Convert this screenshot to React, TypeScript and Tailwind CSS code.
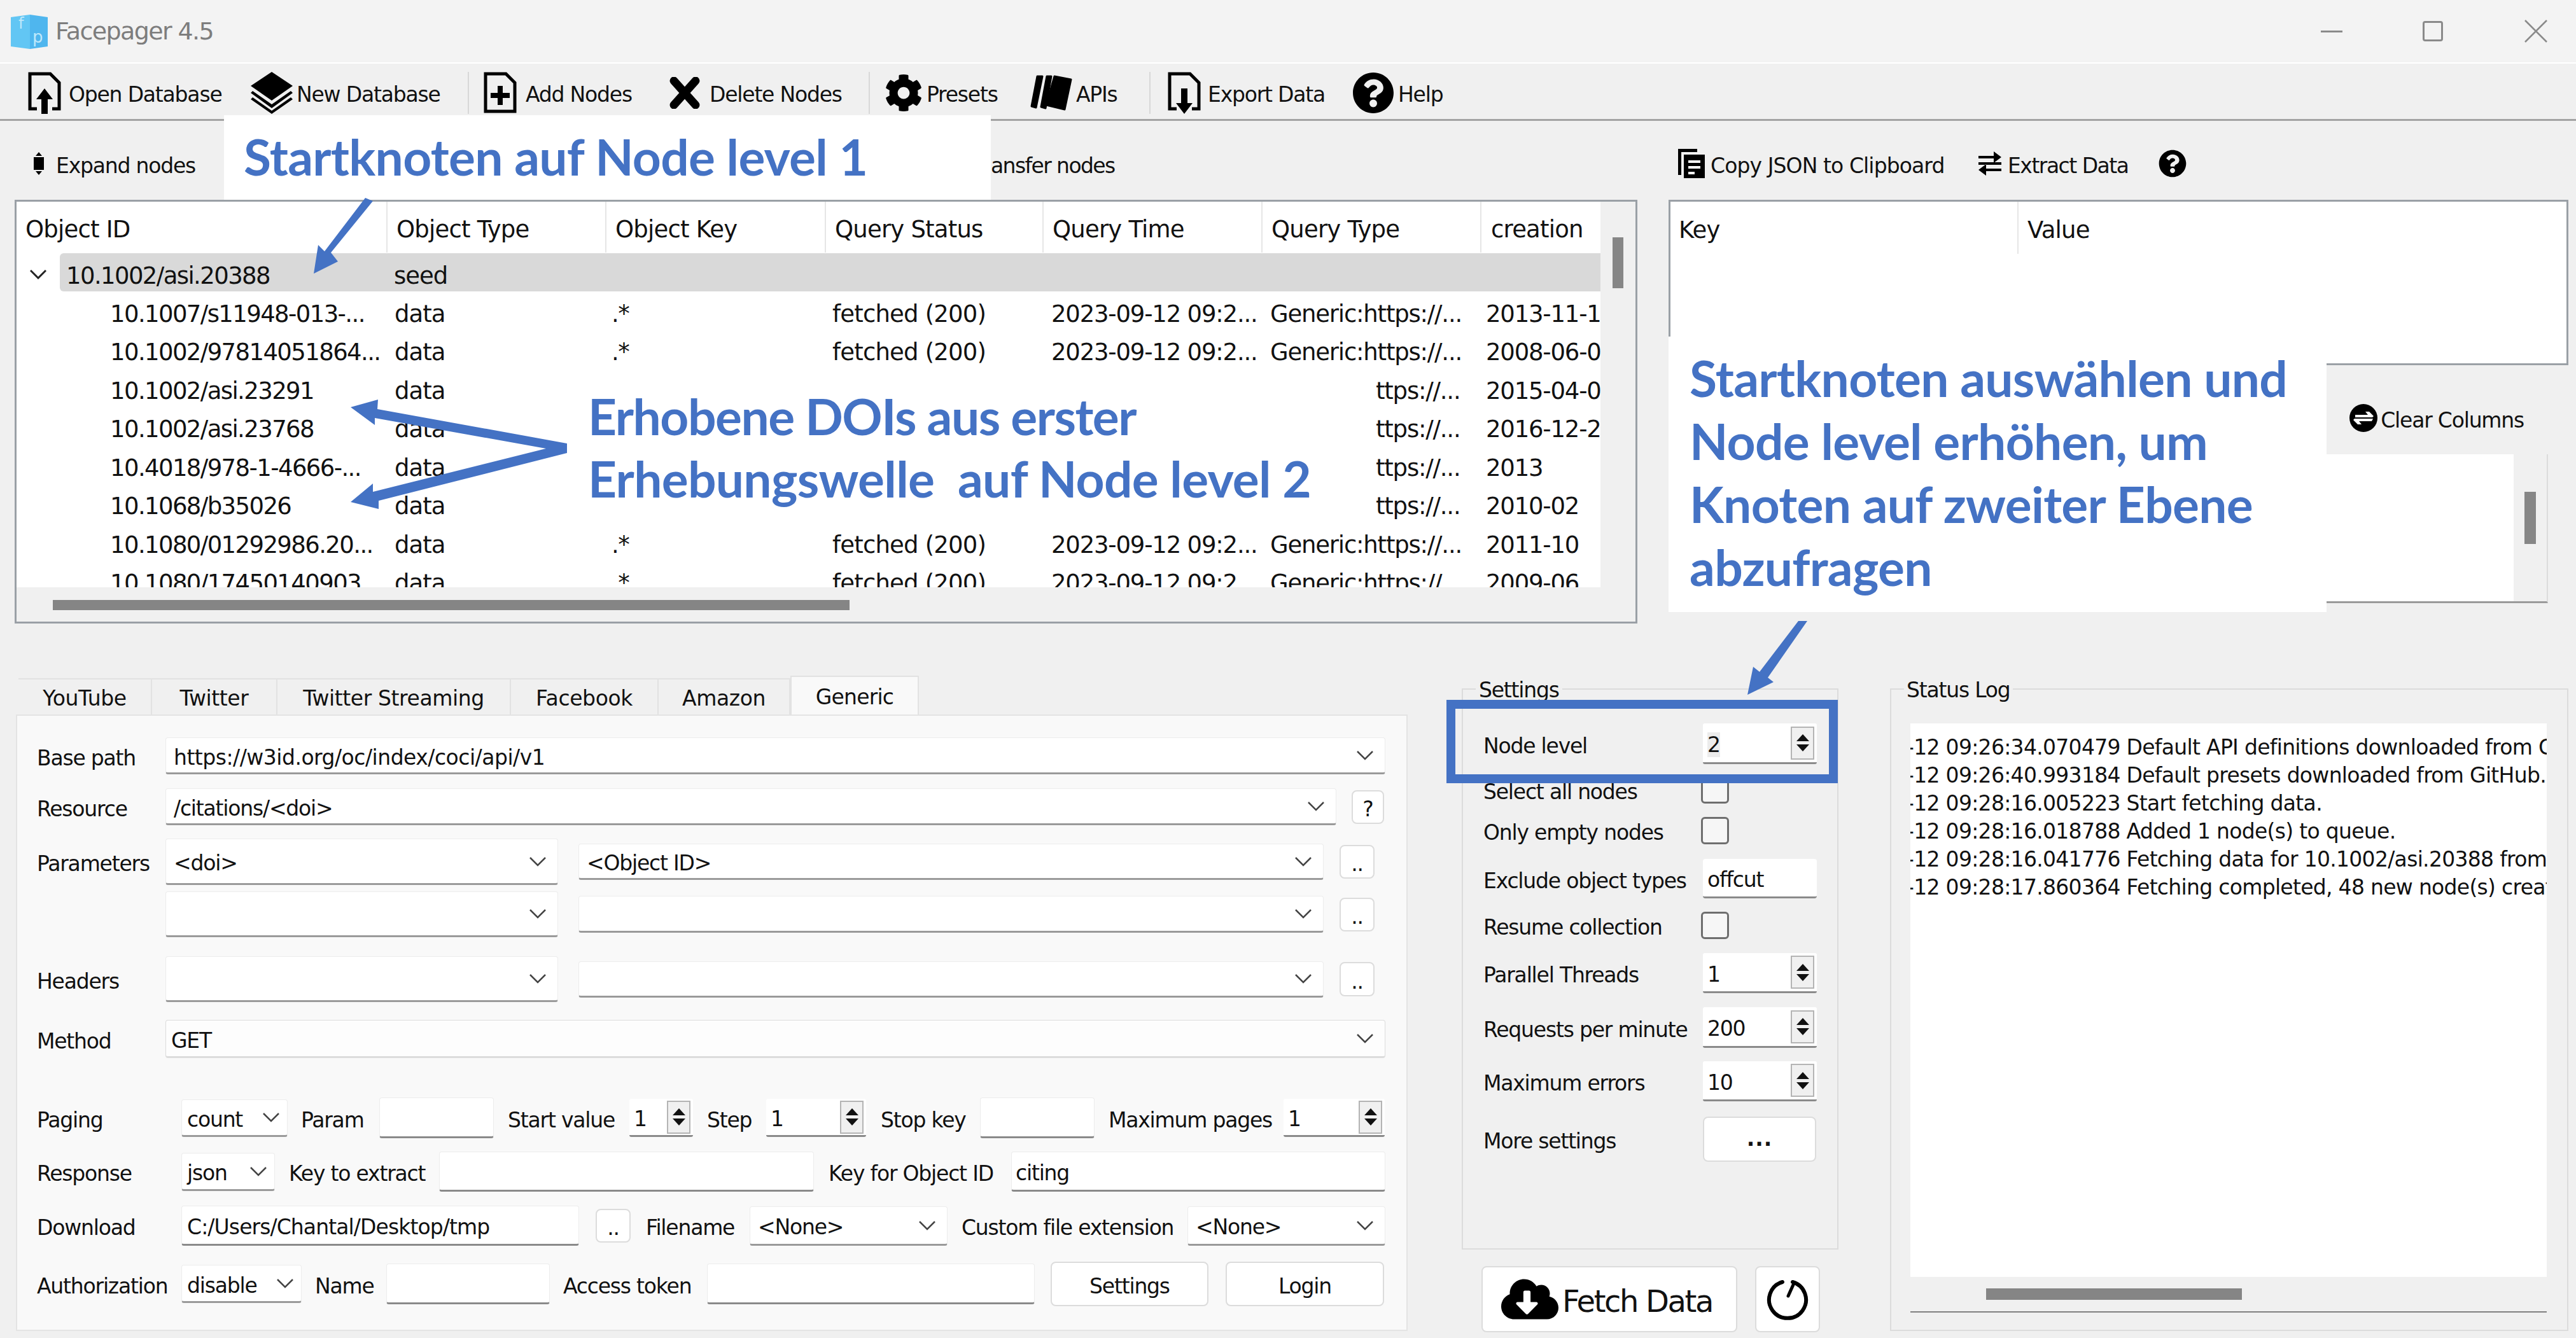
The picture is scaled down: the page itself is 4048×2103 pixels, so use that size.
/**
 * Facepager 4.5 main window with blue tutorial annotations on top.
 */
import type { ReactNode } from 'react';
import { FaCog, FaQuestionCircle, FaCloudDownloadAlt } from 'react-icons/fa';

const ui = "font-['DejaVu_Sans',sans-serif] text-[#111] whitespace-nowrap";

interface BoxProps {
  className?: string;
  children?: ReactNode;
}

function Text({ className = '', children }: BoxProps) {
  return <span className={`shrink-0 pt-[6px] text-[33px] tracking-[-1.2px] leading-none ${className}`}>{children}</span>;
}

function Chevron() {
  return (
    <svg width="26" height="16" viewBox="0 0 26 16" className="shrink-0" fill="none" stroke="#444" strokeWidth="2.5">
      <path d="M1 2l12 12L25 2" />
    </svg>
  );
}

function Input({ className = '', textClass = '', children }: BoxProps & { textClass?: string }) {
  return (
    <div className={`flex items-center shrink-0 bg-white rounded-[4px] border border-[#ececec] border-b-[3px] border-b-[#8a8a8a] pl-[8px] ${className}`}>
      <Text className={textClass}>{children}</Text>
    </div>
  );
}

function Combo({ className = '', textClass = '', children }: BoxProps & { textClass?: string }) {
  return (
    <div className={`flex items-center justify-between shrink-0 bg-white rounded-[4px] border border-[#ececec] border-b-[3px] border-b-[#9a9a9a] pl-[12px] pr-[18px] ${className}`}>
      <Text className={textClass}>{children}</Text>
      <Chevron />
    </div>
  );
}

function Spin({ className = '', children }: BoxProps) {
  return (
    <div className={`flex items-center justify-between shrink-0 bg-white rounded-[3px] border-b-[3px] border-b-[#8a8a8a] pl-[7px] pr-[4px] ${className}`}>
      <Text>{children}</Text>
      <div className="flex flex-col items-center justify-center gap-[5px] w-[37px] h-[52px] border-2 border-[#b4b4b4] bg-[#f0f0f0]">
        <svg width="20" height="11" viewBox="0 0 20 11"><path d="M10 0l10 11H0z" fill="#111" /></svg>
        <svg width="20" height="11" viewBox="0 0 20 11"><path d="M10 11L20 0H0z" fill="#111" /></svg>
      </div>
    </div>
  );
}

function Button({ className = '', children }: BoxProps) {
  return (
    <div className={`flex items-center justify-center shrink-0 bg-white rounded-[8px] border-2 border-[#dcdcdc] ${className}`}>
      {children}
    </div>
  );
}

function Check() {
  return <div className="-ml-[3px] w-[44px] h-[43px] shrink-0 rounded-[6px] border-[3px] border-[#6e6e6e] bg-[#f6f6f6]" />;
}

function DocIcon({ arrow }: { arrow: 'up' | 'down' | 'plus' }) {
  return (
    <svg width="52" height="66" viewBox="0 0 52 66" className="shrink-0">
      {arrow === 'plus' ? (
        <>
          <path d="M3 62V3h32l14 14v45z" fill="none" stroke="#000" strokeWidth="5" />
          <path d="M22 22h8v11h11v8H30v11h-8V41H11v-8h11z" fill="#000" />
        </>
      ) : (
        <path d="M14 58H3V3h32l14 14v41H38" fill="none" stroke="#000" strokeWidth="5" />
      )}
      {arrow === 'up' && <path d="M26 26l13 17h-8v23H21V43h-8z" fill="#000" />}
      {arrow === 'down' && <path d="M26 66l13-17h-8V26H21v23h-8z" fill="#000" />}
    </svg>
  );
}

function LayersIcon() {
  return (
    <svg width="66" height="66" viewBox="0 0 66 66" className="shrink-0">
      <path d="M33 0l33 22-33 23L0 22z" fill="#000" />
      <path d="M3 30l30 21 30-21 3 3-33 24L0 33z" fill="#000" />
      <path d="M3 40l30 21 30-21 3 3-33 23L0 43z" fill="#000" />
    </svg>
  );
}

function CrossIcon() {
  return (
    <svg width="50" height="50" viewBox="0 0 50 50" className="shrink-0" stroke="#000" strokeWidth="13" strokeLinecap="round">
      <path d="M8 6l34 38M42 6L8 44" />
    </svg>
  );
}

function CardsIcon() {
  return (
    <svg width="66" height="56" viewBox="0 0 66 56" className="shrink-0" fill="#000" stroke="#000" strokeWidth="3" strokeLinejoin="round">
      <path d="M11 2h8L9 51l-7-2z" />
      <path d="M26 2h7L24 52l-7-2z" />
      <path d="M38 2l26 5-10 47-29-7z" />
    </svg>
  );
}

function ToolItem({ className = '', icon, label, gap }: { className?: string; icon: ReactNode; label: string; gap: string }) {
  return (
    <div className={`flex items-center shrink-0 ${gap} ${className}`}>
      {icon}
      <Text>{label}</Text>
    </div>
  );
}

function Toolbar() {
  return (
    <div className="flex items-center h-[90px] pl-[44px] pt-[4px] bg-[#f0f0f0] border-b-[3px] border-[#a3a3a3]">
      <ToolItem className="w-[350px]" gap="gap-[12px]" icon={<DocIcon arrow="up" />} label="Open Database" />
      <ToolItem className="w-[341px]" gap="gap-[6px]" icon={<LayersIcon />} label="New Database" />
      <div className="w-[2px] h-[66px] bg-[#d8d8d8] mr-[23px]" />
      <ToolItem className="w-[291px]" gap="gap-[14px]" icon={<DocIcon arrow="plus" />} label="Add Nodes" />
      <ToolItem className="w-[314px]" gap="gap-[14px]" icon={<CrossIcon />} label="Delete Nodes" />
      <div className="w-[2px] h-[66px] bg-[#d8d8d8] mr-[23px]" />
      <ToolItem className="w-[229px]" gap="gap-[6px]" icon={<FaCog size={60} color="#000" />} label="Presets" />
      <ToolItem className="w-[187px]" gap="gap-[6px]" icon={<CardsIcon />} label="APIs" />
      <div className="w-[2px] h-[66px] bg-[#d8d8d8] mr-[27px]" />
      <ToolItem className="w-[290px]" gap="gap-[11px]" icon={<DocIcon arrow="down" />} label="Export Data" />
      <ToolItem gap="gap-[6px]" icon={<FaQuestionCircle size={66} color="#000" />} label="Help" />
    </div>
  );
}

const fetchedCells = ['.*', 'fetched (200)', '2023-09-12 09:2...', 'Generic:https://...'];
// Rows behind the annotation only show the tail of the query type
const coveredCells = ['', '', '', 'ttps://...'];

const treeRows = [
  ['10.1007/s11948-013-...', ...fetchedCells, '2013-11-18'],
  ['10.1002/97814051864...', ...fetchedCells, '2008-06-05'],
  ['10.1002/asi.23291', ...coveredCells, '2015-04-02'],
  ['10.1002/asi.23768', ...coveredCells, '2016-12-21'],
  ['10.4018/978-1-4666-...', ...coveredCells, '2013'],
  ['10.1068/b35026', ...coveredCells, '2010-02'],
  ['10.1080/01292986.20...', ...fetchedCells, '2011-10'],
  ['10.1080/17450140903...', ...fetchedCells, '2009-06'],
];

const treeText = 'text-[37px] tracking-[-1.6px] leading-none';
const headText = 'text-[37px] tracking-[-0.8px] leading-none pt-[6px]';

function TreeHeaderCell({ className = '', children }: BoxProps) {
  return (
    <div className={`flex items-center shrink-0 h-[80px] border-r-2 border-[#e6e6e6] pl-[14px] ${headText} ${className}`}>
      {children}
    </div>
  );
}

function TreeRow({ cells }: { cells: string[] }) {
  const covered = cells[1] === '';
  return (
    <div className={`flex items-center shrink-0 h-[60.5px] pt-[10px] ${treeText}`}>
      <span className="w-[583px] pl-[147px] shrink-0">{cells[0]}</span>
      <span className="w-[344px] pl-[11px] shrink-0 tracking-[-1px]">data</span>
      <span className="w-[345px] pl-[8px] shrink-0">{cells[1]}</span>
      <span className="w-[342px] pl-[10px] shrink-0 tracking-[-0.8px]">{cells[2]}</span>
      <span className="w-[344px] pl-[12px] shrink-0 tracking-[-1.2px]">{cells[3]}</span>
      <span className={`w-[344px] shrink-0 tracking-[-1.2px] ${covered ? 'pl-[178px]' : 'pl-[12px]'}`}>{cells[4]}</span>
      <span className="pl-[7px] shrink-0 tracking-[-1.2px]">{cells[5]}</span>
    </div>
  );
}

function TreePanel() {
  return (
    <div className="flex flex-col h-[666px] border-[3px] border-[#9aa0a6] bg-[#f0f0f0]">
      <div className="flex flex-1 min-h-0">
        <div className="flex flex-col w-[2489px] h-[606px] overflow-hidden bg-white">
          <div className="flex shrink-0 h-[81px]">
            <TreeHeaderCell className="w-[583px]">Object ID</TreeHeaderCell>
            <TreeHeaderCell className="w-[344px]">Object Type</TreeHeaderCell>
            <TreeHeaderCell className="w-[345px]">Object Key</TreeHeaderCell>
            <TreeHeaderCell className="w-[342px]">Query Status</TreeHeaderCell>
            <TreeHeaderCell className="w-[344px]">Query Time</TreeHeaderCell>
            <TreeHeaderCell className="w-[344px]">Query Type</TreeHeaderCell>
            <div className={`flex items-center h-[80px] pl-[15px] ${headText}`}>creation</div>
          </div>
          <div className={`flex items-center shrink-0 h-[60px] ${treeText}`}>
            <div className="flex justify-center w-[68px] shrink-0 pt-[6px]">
              <svg width="26" height="16" viewBox="0 0 26 16" fill="none" stroke="#222" strokeWidth="3"><path d="M1 2l12 12L25 2" /></svg>
            </div>
            <div className="flex items-center flex-1 h-[60px] bg-[#d9d9d9] rounded-l-[6px] pl-[10px] pt-[10px]">
              <span className="w-[515px] shrink-0">10.1002/asi.20388</span>
              <span className="tracking-[-1px]">seed</span>
            </div>
          </div>
          {treeRows.map(r => (
            <TreeRow key={r[0]} cells={r} />
          ))}
        </div>
        <div className="flex justify-center flex-1 pt-[56px]">
          <div className="w-[17px] h-[80px] bg-[#868686]" />
        </div>
      </div>
      <div className="h-[54px] shrink-0 pl-[57px] pt-[20px]">
        <div className="w-[1252px] h-[16px] bg-[#858585]" />
      </div>
    </div>
  );
}

function ActionsRight() {
  return (
    <div className="flex items-center h-[124px] pl-[15px] pt-[10px]">
      <svg width="42" height="46" viewBox="0 0 42 46" className="shrink-0">
        <path d="M0 0h30v5H5v36H0z" fill="#000" />
        <path d="M9 9h33v37H9z" fill="#000" />
        <path d="M16 18h19v4H16zM16 27h19v4H16zM16 36h10v4H16z" fill="#fff" />
      </svg>
      <Text className="ml-[9px] w-[421px] !tracking-[-0.9px]">Copy JSON to Clipboard</Text>
      <svg width="36" height="44" viewBox="0 0 36 44" className="shrink-0" fill="#000">
        <path d="M0 10h24V3l12 9-12 9v-7H0zM0 20h36v4H0zM36 30H12v-7L0 32l12 9v-7h24z" />
      </svg>
      <Text className="ml-[10px] w-[237px] !tracking-[-1.5px]">Extract Data</Text>
      <FaQuestionCircle size={44} color="#000" />
    </div>
  );
}

function TabStrip() {
  const tabs = [
    { label: 'YouTube', cls: 'w-[210px]' },
    { label: 'Twitter', cls: 'w-[197px]' },
    { label: 'Twitter Streaming', cls: 'w-[367px]' },
    { label: 'Facebook', cls: 'w-[232px]' },
    { label: 'Amazon', cls: 'w-[207px]' },
  ];
  return (
    <div className="flex items-end h-[63px] pl-[4px]">
      {tabs.map(t => (
        <div key={t.label} className={`flex items-center justify-center h-[57px] bg-[#f0f0f0] border-t-2 border-r-2 border-[#e2e2e2] ${t.cls}`}>
          <Text className="!tracking-[-0.4px] !pt-[4px]">{t.label}</Text>
        </div>
      ))}
      <div className="flex items-center justify-center w-[202px] h-[63px] bg-[#f9f9f9] border-t-2 border-x-2 border-[#e2e2e2] -mb-[2px]">
        <Text className="!tracking-[-0.8px] !pt-[2px]">Generic</Text>
      </div>
    </div>
  );
}

function QueryForm() {
  return (
    <div className="flex flex-col h-[969px] bg-[#f9f9f9] border-2 border-[#e4e4e4] pl-[31px] pt-[34px]">
      <div className="flex items-center h-[58px]">
        <Text className="w-[202px]">Base path</Text>
        <Combo className="w-[1917px] h-[58px]" textClass="!tracking-[-0.5px]">https://w3id.org/oc/index/coci/api/v1</Combo>
      </div>
      <div className="flex items-center h-[58px] mt-[22px]">
        <Text className="w-[202px]">Resource</Text>
        <Combo className="w-[1840px] h-[58px]">/citations/&lt;doi&gt;</Combo>
        <Button className="ml-[24px] w-[51px] h-[53px]"><Text>?</Text></Button>
      </div>
      <div className="flex items-center h-[73px] mt-[21px]">
        <Text className="w-[202px]">Parameters</Text>
        <Combo className="w-[617px] h-[73px]">&lt;doi&gt;</Combo>
        <Combo className="ml-[32px] w-[1171px] h-[57px]">&lt;Object ID&gt;</Combo>
        <Button className="ml-[25px] w-[55px] h-[53px]"><Text>..</Text></Button>
      </div>
      <div className="flex items-center h-[72px] mt-[10px] pl-[202px]">
        <Combo className="w-[617px] h-[72px]" />
        <Combo className="ml-[32px] w-[1171px] h-[58px]" />
        <Button className="ml-[25px] w-[55px] h-[53px]"><Text>..</Text></Button>
      </div>
      <div className="flex items-center h-[72px] mt-[30px]">
        <Text className="w-[202px]">Headers</Text>
        <Combo className="w-[617px] h-[72px]" />
        <Combo className="ml-[32px] w-[1171px] h-[57px]" />
        <Button className="ml-[25px] w-[55px] h-[54px]"><Text>..</Text></Button>
      </div>
      <div className="flex items-center h-[60px] mt-[28px]">
        <Text className="w-[202px]">Method</Text>
        <Combo className="w-[1917px] h-[60px] !border-[#dcdcdc] !bg-[#fdfdfd] !pl-[8px]">GET</Combo>
      </div>
      <div className="flex items-center h-[64px] mt-[62px]">
        <Text className="w-[227px]">Paging</Text>
        <Combo className="w-[167px] h-[59px] !pl-[8px] !pr-[12px]">count</Combo>
        <Text className="ml-[21px] w-[123px]">Param</Text>
        <Input className="w-[180px] h-[64px]" />
        <Text className="ml-[22px] w-[191px]">Start value</Text>
        <Spin className="w-[100px] h-[60px]">1</Spin>
        <Text className="ml-[22px] w-[93px]">Step</Text>
        <Spin className="w-[157px] h-[60px]">1</Spin>
        <Text className="ml-[23px] w-[156px]">Stop key</Text>
        <Input className="w-[180px] h-[64px]" />
        <Text className="ml-[22px] w-[275px]">Maximum pages</Text>
        <Spin className="w-[159px] h-[60px]">1</Spin>
      </div>
      <div className="flex items-center h-[63px] mt-[21px]">
        <Text className="w-[227px]">Response</Text>
        <Combo className="w-[147px] h-[60px] !pl-[8px] !pr-[12px]">json</Combo>
        <Text className="ml-[22px] w-[236px]">Key to extract</Text>
        <Input className="w-[589px] h-[63px]" />
        <Text className="ml-[23px] w-[287px]">Key for Object ID</Text>
        <Input className="w-[588px] h-[63px] !pl-[6px]">citing</Input>
      </div>
      <div className="flex items-center h-[63px] mt-[22px]">
        <Text className="w-[227px]">Download</Text>
        <Input className="w-[625px] h-[63px]" textClass="!tracking-[-0.9px]">C:/Users/Chantal/Desktop/tmp</Input>
        <Button className="ml-[26px] w-[55px] h-[53px]"><Text>..</Text></Button>
        <Text className="ml-[24px] w-[163px]">Filename</Text>
        <Combo className="w-[311px] h-[62px]">&lt;None&gt;</Combo>
        <Text className="ml-[22px] w-[355px]">Custom file extension</Text>
        <Combo className="w-[311px] h-[62px]">&lt;None&gt;</Combo>
      </div>
      <div className="flex items-center h-[70px] mt-[25px]">
        <Text className="w-[227px]">Authorization</Text>
        <Combo className="w-[189px] h-[60px] !pl-[8px] !pr-[12px]">disable</Combo>
        <Text className="ml-[21px] w-[112px]">Name</Text>
        <Input className="w-[257px] h-[64px]" />
        <Text className="ml-[21px] w-[226px]">Access token</Text>
        <Input className="w-[515px] h-[64px]" />
        <Button className="ml-[25px] w-[248px] h-[70px]"><Text>Settings</Text></Button>
        <Button className="ml-[27px] w-[249px] h-[70px]"><Text>Login</Text></Button>
      </div>
    </div>
  );
}

function SettingsRow({ className = '', label, children }: BoxProps & { label: string }) {
  return (
    <div className={`flex items-center ${className}`}>
      <Text className="w-[345px]">{label}</Text>
      {children}
    </div>
  );
}

function SettingsPanel() {
  return (
    <div className="flex flex-col w-[592px] mt-[102px]">
      <div className="flex flex-col h-[882px] border-2 border-[#dcdcdc] pl-[32px]">
        <div className="-mt-[21px] -ml-[12px] w-fit h-[40px] px-[5px] bg-[#f0f0f0] flex items-center">
          <Text className="!pt-[2px]">Settings</Text>
        </div>
        <SettingsRow className="h-[64px] mt-[34px]" label="Node level">
          <Spin className="w-[179px] h-[64px]"><span className="bg-[#ececec]">2</span></Spin>
        </SettingsRow>
        <SettingsRow className="h-[43px] mt-[19px]" label="Select all nodes"><Check /></SettingsRow>
        <SettingsRow className="h-[43px] mt-[21px]" label="Only empty nodes"><Check /></SettingsRow>
        <SettingsRow className="h-[62px] mt-[23px]" label="Exclude object types">
          <Input className="w-[179px] h-[62px] !pl-[7px] !border-x-0 !border-t-0">offcut</Input>
        </SettingsRow>
        <SettingsRow className="h-[43px] mt-[21px]" label="Resume collection"><Check /></SettingsRow>
        <SettingsRow className="h-[63px] mt-[22px]" label="Parallel Threads">
          <Spin className="w-[179px] h-[63px]">1</Spin>
        </SettingsRow>
        <SettingsRow className="h-[64px] mt-[22px]" label="Requests per minute">
          <Spin className="w-[179px] h-[64px]">200</Spin>
        </SettingsRow>
        <SettingsRow className="h-[63px] mt-[21px]" label="Maximum errors">
          <Spin className="w-[179px] h-[63px]">10</Spin>
        </SettingsRow>
        <SettingsRow className="h-[71px] mt-[24px]" label="More settings">
          <Button className="w-[178px] h-[71px]"><Text className="!tracking-[1px] -mt-[8px] font-bold">...</Text></Button>
        </SettingsRow>
      </div>
      <div className="flex mt-[26px] pl-[31px]">
        <Button className="w-[402px] h-[104px] gap-[6px] pr-[8px]">
          <FaCloudDownloadAlt size={90} color="#000" />
          <span className="pt-[6px] text-[48px] tracking-[-2.4px] leading-none">Fetch Data</span>
        </Button>
        <Button className="ml-[28px] w-[102px] h-[104px]">
          <svg width="72" height="72" viewBox="0 0 72 72" fill="none" stroke="#000" strokeWidth="6" strokeLinecap="round">
            <path d="M28 9a29 29 0 1 0 16 0" />
            <path d="M46 11l-9 20" strokeWidth="5" />
          </svg>
        </Button>
      </div>
    </div>
  );
}

const logLines = [
  '-12 09:26:34.070479 Default API definitions downloaded from GitHub.',
  '-12 09:26:40.993184 Default presets downloaded from GitHub.',
  '-12 09:28:16.005223 Start fetching data.',
  '-12 09:28:16.018788 Added 1 node(s) to queue.',
  '-12 09:28:16.041776 Fetching data for 10.1002/asi.20388 from Generic',
  '-12 09:28:17.860364 Fetching completed, 48 new node(s) created.',
];

function StatusLog() {
  return (
    <div className="flex flex-col w-[1066px] h-[1010px] mt-[102px] border-2 border-[#dcdcdc] pl-[30px]">
      <div className="-mt-[21px] -ml-[10px] w-fit h-[40px] px-[4px] bg-[#f0f0f0] flex items-center">
        <Text className="!pt-[2px]">Status Log</Text>
      </div>
      <div className="flex flex-col w-[1000px] h-[926px] mt-[34px] border-b-2 border-[#808080]">
        <div className="h-[870px] shrink-0 bg-white overflow-hidden pt-[13px]">
          {logLines.map(l => (
            <div key={l} className="flex items-center h-[44px] -ml-[6px]">
              <Text className="!tracking-[-0.7px] !pt-[4px]">{l}</Text>
            </div>
          ))}
        </div>
        <div className="pl-[119px] pt-[18px]">
          <div className="w-[402px] h-[18px] bg-[#858585]" />
        </div>
      </div>
    </div>
  );
}

// Blue tutorial overlays pasted on top of the app screenshot
function Annotations() {
  const label = "font-['Lato',sans-serif] font-bold text-[#4472c4] text-[78.5px] tracking-[-0.7px] leading-none";
  return (
    <div className="absolute inset-0 pointer-events-none">
      <div className={`absolute left-[352px] top-[181px] w-[1205px] h-[133px] bg-white pl-[31px] pt-[26px] ${label}`}>
        Startknoten auf Node level 1
      </div>
      <div className={`absolute left-[924px] top-[605px] ${label} !leading-[98px]`}>
        <div className="!tracking-[-1.5px]">Erhobene DOIs aus erster</div>
        <div className="whitespace-pre">Erhebungswelle  auf Node level 2</div>
      </div>
      <div className={`absolute left-[2622px] top-[529px] w-[1034px] h-[433px] bg-white pl-[33px] pt-[16px] ${label} !leading-[99px]`}>
        <div>Startknoten auswählen und</div>
        <div>Node level erhöhen, um</div>
        <div>Knoten auf zweiter Ebene</div>
        <div>abzufragen</div>
      </div>
      <div className="absolute left-[2273px] top-[1100px] w-[615px] h-[131px] border-[14px] border-[#4472c4]" />
      <svg className="absolute left-0 top-0" width="4048" height="2103" viewBox="0 0 4048 2103" fill="#4472c4">
        <polygon points="574,311 586,316 520,397 531,411 493,430 500,385 510,395" />
        <polygon points="551,640 594,628 593,643 891,697 891,712 595,787 595,800 551,789 586,760 586,773 858,705 589,657 589,668" />
        <polygon points="2826,976 2840,976 2778,1065 2787,1072 2746,1092 2755,1048 2765,1056" />
      </svg>
    </div>
  );
}

export default function App() {
  return (
    <div className={`relative w-[4048px] h-[2103px] overflow-hidden bg-[#f0f0f0] ${ui}`}>
      {/* Title bar */}
      <div className="flex items-center h-[100px] pl-[17px] pr-[45px] bg-[#f3f3f3] border-b-2 border-white">
        <svg width="58" height="56" viewBox="0 0 58 56" className="shrink-0">
          <path d="M0 6l30-4v54L0 52z" fill="#62c6f4" />
          <path d="M30 2l28 4v46l-28 4z" fill="#4fb6ee" />
          <text x="34" y="46" fontSize="26" fill="#bfe8fb" fontFamily="DejaVu Sans">p</text>
          <text x="12" y="24" fontSize="24" fill="#bfe8fb" fontFamily="DejaVu Sans">f</text>
        </svg>
        <span className="ml-[12px] text-[38px] tracking-[-1.6px] text-[#7d7d7d] leading-none">Facepager 4.5</span>
        <div className="flex items-center ml-auto">
          <div className="w-[34px] h-[3px] bg-[#8a8a8a]" />
          <div className="ml-[126px] w-[32px] h-[32px] rounded-[4px] border-[3px] border-[#8a8a8a]" />
          <svg width="36" height="36" viewBox="0 0 36 36" className="ml-[128px]" stroke="#8a8a8a" strokeWidth="2.5">
            <path d="M1 1l34 34M35 1L1 35" />
          </svg>
        </div>
      </div>
      <Toolbar />

      {/* Upper panes: nodes on the left, details on the right */}
      <div className="flex h-[790px]">
        <div className="flex flex-col w-[2550px] ml-[23px]">
          <div className="flex items-center h-[124px] pt-[10px]">
            <svg width="22" height="36" viewBox="0 0 22 36" className="ml-[27px] shrink-0" fill="#000">
              <path d="M11 0l5 6H6zM3 8h16v20H3zM11 36l5-6H6z" />
            </svg>
            <Text className="ml-[16px] w-[1469px]">Expand nodes</Text>
            <Text className="!tracking-[-1.6px]">ansfer nodes</Text>
          </div>
          <TreePanel />
        </div>
        <div className="flex flex-col w-[1414px] ml-[49px]">
          <ActionsRight />
          <div className="flex flex-col h-[260px] bg-white border-[3px] border-[#9aa0a6]">
            <div className="flex h-[82px]">
              <div className={`flex items-center w-[547px] pl-[13px] border-r-2 border-[#e6e6e6] ${headText}`}>Key</div>
              <div className={`flex items-center pl-[14px] ${headText}`}>Value</div>
            </div>
          </div>
          <div className="flex items-center justify-end h-[140px] pr-[70px] pt-[26px] gap-[5px]">
            <svg width="44" height="44" viewBox="0 0 44 44" className="shrink-0">
              <circle cx="22" cy="22" r="22" fill="#000" />
              <path d="M9 17h20l-4-5h6l7 7-2 2H9zM35 27H15l4 5h-6l-7-7 2-2h29z" fill="#fff" />
            </svg>
            <Text>Clear Columns</Text>
          </div>
          <div className="flex h-[234px] ml-[1034px] w-[348px] border-b-[3px] border-r-2 border-b-[#9a9a9a] border-r-[#dcdcdc]">
            <div className="w-[294px] bg-white shrink-0" />
            <div className="flex justify-center flex-1 pt-[59px]">
              <div className="w-[18px] h-[82px] bg-[#868686]" />
            </div>
          </div>
        </div>
      </div>

      {/* Query setup, fetch settings and log */}
      <div className="flex">
        <div className="flex flex-col w-[2187px] ml-[25px] pt-[80px]">
          <TabStrip />
          <QueryForm />
        </div>
        <div className="ml-[85px]"><SettingsPanel /></div>
        <div className="ml-[81px]"><StatusLog /></div>
      </div>

      <Annotations />
    </div>
  );
}
